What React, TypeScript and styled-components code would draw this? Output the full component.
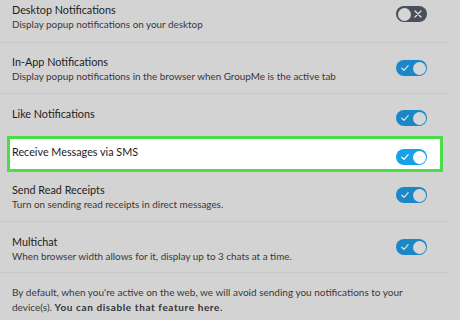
import React from "react";
import styled, { createGlobalStyle } from "styled-components";

const Global = createGlobalStyle`
  html, body { margin: 0; padding: 0; background: #d3d3d3; }
  body { font-family: Lato, "Open Sans", sans-serif; -webkit-font-smoothing: antialiased; }
`;

const Page = styled.div`
  width: 460px;
  height: 320px;
  overflow: hidden;
  background: #d3d3d3;
`;

const List = styled.div`
  display: flex;
  flex-direction: column;
  margin-top: -8px;
`;

const Row = styled.div<{ $h: number; $pt: number; $divider?: boolean }>`
  display: flex;
  align-items: flex-start;
  justify-content: space-between;
  height: ${(p) => p.$h}px;
  box-sizing: border-box;
  padding-top: ${(p) => p.$pt}px;
  padding-left: 12px;
  margin-right: 10px;
  border-bottom: ${(p) => (p.$divider ? "1px solid #c8c8c8" : "none")};
`;

const HighlightRow = styled.div`
  display: flex;
  align-items: flex-start;
  justify-content: space-between;
  height: 36px;
  box-sizing: border-box;
  margin: 0 17px 0 7px;
  padding-top: 6px;
  padding-left: 2px;
  background: #ffffff;
  border: 3px solid #4ade47;
`;

const Texts = styled.div`
  display: flex;
  flex-direction: column;
`;

const Title = styled.div`
  font-size: 10.8px;
  line-height: 14px;
  color: #1c1c1c;
`;

const Sub = styled.div`
  font-size: 9.9px;
  line-height: 14px;
  color: #383838;
`;

const Track = styled.div<{ $on: boolean; $bright?: boolean; $top: number }>`
  position: relative;
  width: 31px;
  height: 16px;
  border-radius: 8px;
  margin-top: ${(p) => p.$top}px;
  margin-right: ${(p) => (p.$bright ? "13px" : "23px")};
  flex-shrink: 0;
  background: ${(p) => (p.$on ? (p.$bright ? "#16a2ea" : "#1a88c8") : "#4a4f5c")};
`;

const Knob = styled.div<{ $on: boolean; $bright?: boolean }>`
  position: absolute;
  top: 1.5px;
  ${(p) => (p.$on ? "right: 1.5px;" : "left: 1.5px;")}
  width: 13px;
  height: 13px;
  border-radius: 50%;
  background: ${(p) => (p.$bright ? "#ffffff" : "#d6d6d6")};
`;

const Mark = styled.svg<{ $on: boolean }>`
  position: absolute;
  top: 4px;
  ${(p) => (p.$on ? "left: 5px;" : "right: 5px;")}
  width: 8px;
  height: 8px;
`;

function Toggle({ on, bright, top }: { on: boolean; bright?: boolean; top: number }) {
  return (
    <Track $on={on} $bright={bright} $top={top}>
      <Knob $on={on} $bright={bright} />
      <Mark $on={on} viewBox="0 0 8 8">
        {on ? (
          <path d="M0.8 4.2 L3 6.3 L7.2 1.6" fill="none" stroke={bright ? "#ffffff" : "#e4e4e4"} strokeWidth="1.2" strokeLinecap="round" strokeLinejoin="round" />
        ) : (
          <path d="M1 1 L7 7 M7 1 L1 7" fill="none" stroke="#e0e0e0" strokeWidth="1.3" strokeLinecap="round" />
        )}
      </Mark>
    </Track>
  );
}

const Footer = styled.div`
  padding: 12px 50px 0 12px;
  font-size: 10px;
  line-height: 15px;
  color: #383838;
`;

const Bold = styled.span`
  font-weight: 700;
  letter-spacing: 0.6px;
  color: #333;
`;

export default function App() {
  return (
    <Page>
      <Global />
      <List>
        <Row $h={51} $pt={11} $divider>
          <Texts>
            <Title>Desktop Notifications</Title>
            <Sub>Display popup notifications on your desktop</Sub>
          </Texts>
          <Toggle on={false} top={3} />
        </Row>
        <Row $h={51} $pt={12} $divider>
          <Texts>
            <Title>In-App Notifications</Title>
            <Sub>Display popup notifications in the browser when GroupMe is the active tab</Sub>
          </Texts>
          <Toggle on top={5} />
        </Row>
        <Row $h={42} $pt={13}>
          <Texts>
            <Title>Like Notifications</Title>
          </Texts>
          <Toggle on top={3} />
        </Row>
        <HighlightRow>
          <Texts>
            <Title>Receive Messages via SMS</Title>
          </Texts>
          <Toggle on bright top={4} />
        </HighlightRow>
        <Row $h={50} $pt={11} $divider>
          <Texts>
            <Title>Send Read Receipts</Title>
            <Sub>Turn on sending read receipts in direct messages.</Sub>
          </Texts>
          <Toggle on top={4} />
        </Row>
        <Row $h={51} $pt={13} $divider>
          <Texts>
            <Title>Multichat</Title>
            <Sub>When browser width allows for it, display up to 3 chats at a time.</Sub>
          </Texts>
          <Toggle on top={4} />
        </Row>
      </List>
      <Footer>
        By default, when you're active on the web, we will avoid sending you notifications to your device(s).{" "}
        <Bold>You can disable that feature here.</Bold>
      </Footer>
    </Page>
  );
}
